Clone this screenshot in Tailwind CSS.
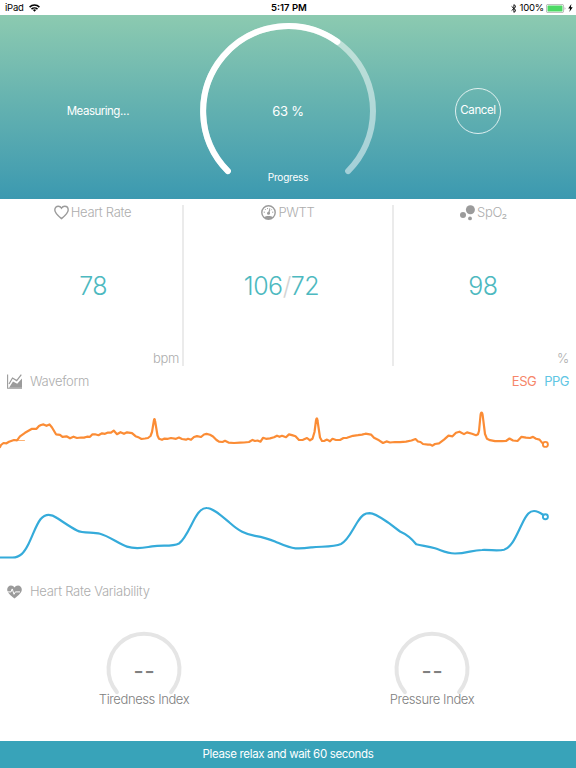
<!DOCTYPE html>
<html lang="en">
<head>
    <meta charset="UTF-8">
    <meta name="viewport" content="width=device-width, initial-scale=1.0">
    <title>Health Monitor</title>
    <script src="https://cdn.jsdelivr.net/npm/@tailwindcss/browser@4"></script>
</head>
<body class="bg-white">
    <div class="flex h-[768px] w-[576px] flex-col overflow-hidden bg-white font-['Inter',sans-serif]">
        <!-- Status bar -->
        <div class="grid h-[15px] shrink-0 grid-cols-3 items-center pt-px pr-[3px] pl-[5px] text-[9.5px] leading-none text-black">
            <div class="flex items-center gap-[5px]">
                <span class="tracking-[-0.2px]">iPad</span>
                <svg class="h-[8px] w-[11px]" viewBox="0 0 11 8" fill="none" stroke="#000" stroke-width="1.5">
                    <path d="M.6 3.1a7 7 0 0 1 9.8 0"/>
                    <path d="M2.5 5.1a4.3 4.3 0 0 1 6 0"/>
                    <path d="M5.5 7.8 3.9 6.1a2.3 2.3 0 0 1 3.2 0z" fill="#000" stroke="none"/>
                </svg>
            </div>
            <div class="text-center font-semibold">5:17 PM</div>
            <div class="flex items-center justify-end">
                <svg class="mr-[3px] h-[9px] w-[6px]" viewBox="0 0 6 9" fill="none" stroke="#000" stroke-width=".9">
                    <path d="M.6 2.4 5 6.5 2.9 8.4V.6L5 2.5.6 6.6"/>
                </svg>
                <span class="mr-[2px] tracking-[-0.2px]">100%</span>
                <svg class="h-[9px] w-[20px]" viewBox="0 0 20 9">
                    <rect x=".4" y=".4" width="17.2" height="8.2" rx="1.5" fill="#fff" stroke="#a8a8a8" stroke-width=".8"/>
                    <rect x="1.5" y="1.5" width="15" height="6" rx=".6" fill="#4cd964"/>
                    <path d="M18.6 3.2v2.6c1.2-.4 1.2-2.2 0-2.6z" fill="#a8a8a8"/>
                </svg>
                <svg class="ml-[2px] h-[8px] w-[5px]" viewBox="0 0 5 8"><path d="M3.4 0 .2 4.6h1.9L1.4 8l3.3-4.8H2.8z"/></svg>
            </div>
        </div>

        <!-- Progress header -->
        <div class="grid h-[184px] shrink-0 grid-cols-[196px_184px_196px] bg-linear-to-b from-[#8ccab0] via-[#63b1b0] to-[#3b99b0] text-white">
            <div class="flex items-center justify-center pt-[9px] text-[11.5px] tracking-[-0.5px]">
                <span>Measuring<span class="tracking-[-0.2px]">...</span></span>
            </div>
            <div class="relative flex items-center justify-center pt-[9px]">
                <svg class="absolute inset-0 h-[184px] w-[184px]" viewBox="0 0 184 184" fill="none" stroke-width="6" stroke-linecap="round">
                    <path d="M31.9 156.1A85 85 0 1 1 152.1 156.1" stroke="#fff" stroke-opacity=".5"/>
                    <path d="M31.9 156.1A85 85 0 0 1 141.3 26.8" stroke="#fff"/>
                </svg>
                <span class="text-[13px] tracking-[-0.3px]">63 %</span>
                <span class="absolute inset-x-0 top-[156px] text-center text-[10px] leading-[13px] tracking-[-0.2px]">Progress</span>
            </div>
            <div class="flex items-center justify-center pt-[7px]">
                <button class="h-[46px] w-[46px] rounded-full border border-white/80 text-[11.5px] tracking-[-0.4px]">Cancel</button>
            </div>
        </div>

        <!-- Metrics -->
        <div class="flex h-[167px] shrink-0 pt-[6px] text-[13px] font-light tracking-[-0.3px] text-[#adadad]">
            <div class="flex w-[184px] flex-col border-r-2 border-[#ebebeb]">
                <div class="flex h-[15px] items-center justify-center gap-[2px] pl-[3px]">
                    <svg class="h-[15px] w-[15px]" viewBox="0 0 15 15" fill="none" stroke="#9b9b9b" stroke-width="1.4"><path d="M7.5 13.6C3.2 10 .8 7.9.8 4.9.8 2.8 2.3 1.2 4.3 1.2c1.4 0 2.500.7 3.200 1.900.7-1.200 1.800-1.900 3.200-1.900 2 0 3.500 1.600 3.500 3.700 0 3-2.400 5.100-6.700 8.700z"/></svg>
                    <span>Heart Rate</span>
                </div>
                <div class="flex flex-1 items-center justify-center pt-[3px] pl-[4px] text-[25px] tracking-[-0.6px] text-[#4db9c0]">78</div>
                <div class="h-[16px] pr-[3px] text-right leading-[16px]">bpm</div>
            </div>
            <div class="flex w-[210px] flex-col border-r-2 border-[#ebebeb]">
                <div class="flex h-[15px] items-center justify-center gap-[2px]">
                    <svg class="h-[15px] w-[15px]" viewBox="0 0 15 15" fill="none">
                        <circle cx="7.5" cy="7.5" r="6.7" stroke="#9b9b9b" stroke-width="1.4"/>
                        <path d="M3 12.2c2-1.7 7-1.7 9 0l-2 1.8H5z" fill="#9b9b9b"/>
                        <path d="M6.9 8.5 8.6 3l.7.3-.9 5.6z" fill="#9b9b9b"/>
                        <circle cx="7.5" cy="8.3" r="1.5" fill="#9b9b9b"/>
                        <path d="M2.7 7.2h1.3M4 4.1l.9.9M6.5 3v1.1M10.700 4.400l-.7.9M11 7.200h1.300" stroke="#9b9b9b" stroke-width=".9"/>
                    </svg>
                    <span>PWTT</span>
                </div>
                <div class="flex flex-1 items-center justify-center pt-[3px] pr-[14px] pl-px text-[25px] tracking-[-0.5px] text-[#4db9c0]">106<span class="text-[#d4d4d4]">/</span>72</div>
                <div class="h-[16px]"></div>
            </div>
            <div class="flex w-[182px] flex-col">
                <div class="flex h-[15px] items-center justify-center gap-[2px] pr-[3px]">
                    <svg class="h-[16px] w-[15px]" viewBox="0 0 15 16" fill="#9b9b9b"><circle cx="10.4" cy="4.7" r="4.5"/><circle cx="3" cy="10" r="3"/><circle cx="10" cy="13.4" r="1.9"/></svg>
                    <span>SpO₂</span>
                </div>
                <div class="flex flex-1 items-center justify-center pt-[3px] pr-[4px] text-[25px] tracking-[-0.4px] text-[#4db9c0]">98</div>
                <div class="h-[16px] pr-[7px] text-right leading-[16px]">%</div>
            </div>
        </div>

        <!-- Waveform -->
        <div class="flex h-[30px] shrink-0 items-center gap-[8px] px-[7px] pt-px text-[13px] font-light tracking-[-0.3px] text-[#adadad]">
            <svg class="-mt-px h-[15px] w-[15px]" viewBox="0 0 15 15">
                <path d="M.6.5v13.8H15" fill="none" stroke="#9b9b9b" stroke-width="1.1"/>
                <path d="M2 10 5.5 4l4.2 2.6L14.3.7" fill="none" stroke="#9b9b9b" stroke-width="1.2"/>
                <path d="M2 13.8 6 7.4l4.2 2.4L15 4.5v9.3z" fill="#9b9b9b"/>
            </svg>
            <span>Waveform</span>
            <span class="ml-auto font-normal tracking-[-0.5px] text-[#f6866a]">ESG</span>
            <span class="font-normal tracking-[-0.5px] text-[#5fc6e4]">PPG</span>
        </div>
        <svg class="mt-[4px] h-[170px] w-[576px] shrink-0" viewBox="0 0 576 170" fill="none" stroke-linejoin="round" stroke-linecap="round">
            <!-- ESG -->
            <path d="M17 40.5H24.5" stroke="#fdb274" stroke-width="1"/>
            <path stroke="#fb8c35" stroke-width="2.200" d="M0 47 1 45 3.5 43 6.5 43.3 9 41.8 14 40 17 40.3 20 36.3 25 32.8 28.5 30.8 32 28.8 36.5 28.8 39 26 41 25 43.5 24.4 46.5 25.8 49.5 24.4 52 27.5 56 34.3 60 34.8 62.5 36.8 66.5 36.3 70 38.3 73.5 36.7 77 38 81 37.5 84 37.6 87 36.7 90 36.8 92.5 34.3 95 34.3 98.5 35.2 102 33.3 105 33.8 108 32.5 111 32.6 113.7 30.6 117 34.2 120.5 32.2 124 33.8 127 32.3 132 33.2 135.5 36.2 139 37.6 141.5 39 145 38.5 148 38 150.5 36 152 32 154 20 C154.3 18.5 154.8 18.8 155.1 21 L157.5 35.5 159 38.8 162 39.8 164.5 38.6 168 38.8 171 38 176 38.8 179 37.6 182 39 186 39.7 188 38.8 191 39.8 194 37 197 36.1 201 37 204 34.5 206.5 33.9 210 34.8 213 36.5 216.5 40 219 41.7 222.5 42 225 40.8 228.5 42.6 234 43 240 42.7 244 42.5 249 42 252.5 39.9 255 41 257.5 40.5 260.5 41.7 263 37.8 266 38.8 270 38.4 274 37.3 277 35.7 279.5 36.8 282 35.8 286 37.2 289 34.4 292 35.1 295.5 36.3 299 40 303 39.8 307 38 310 40.3 312.5 38.8 314.5 32 316 20.5 C316.4 17.5 317.2 17.5 317.5 20.5 L320 37.5 322 41 324.5 40.8 327 39.6 330 41.3 332.5 38.8 336 40 340 40 343.5 38 347 37.8 353 35.8 358 35.2 362 34.6 365.5 33.7 371 34.6 374 37.8 379 40.3 383 43 386.5 41.4 390 42.5 395 42 400 42.2 406 41.6 411.5 40.5 415.5 39 418 41.5 420.5 42 423 44 428 44.6 430 44.5 432.5 45.7 435 44 439 43.3 444 39.6 448.5 35.7 452.5 36.3 456 32.8 459.5 31.7 464 34.1 467 32.4 472 33.8 476 35.2 478 34.2 479 31 480.5 15.5 C480.8 11.7 482.3 11.7 482.7 15.5 L485 34 487 38.8 490 40.2 495 41.2 502 41.2 506 41 509.5 38.5 513 40.5 517.5 41 521.5 36.8 526 37.7 530 38 533 36.9 536 38.8 539.5 39.6 542 42.6 544 44"/>
            <circle cx="545.4" cy="44.4" r="2.5" fill="#fff" stroke="#fb8c35" stroke-width="1.9"/>
            <!-- PPG -->
            <path stroke="#35abda" stroke-width="2.200" d="M0 157.5H12.5C20 157.5 24 153 28.5 144 C33 135 36 125 40.5 119.3 C45 113.8 51 113.8 57 118 C64 122.5 71 127.5 77 130.5 C83 133.8 93 131.8 100 133.7 C109 136 119 144 127 146.6 C137 149.8 145 147.4 152 146.4 C163 144.8 172 147 179 143.5 C185 139.5 190 127 195 118 C199.500 110 203 107.700 207 108 C213 108 221.500 116 230 123 C239 131 245 134 255 135.8 C262 137 268 138.4 275 141.5 C282 144.5 288 147.8 295.5 148.3 C302 148.8 307 148 312 147.3 C322 146.3 334 147.2 341 144 C348 140.5 352 130.5 357.5 122 C362.500 114.5 365 113.1 369.5 113.1 C375.500 113.3 382 118.5 389 123.2 L400 131.500C407 134.5 411 137.7 416.2 144.3 C422 145.8 428 146.3 435 148.3 C442 150.5 446 153.5 455 153.5 C467 153.5 472 150 482 150 C491 149.7 498 151.2 504 149.7 C512 147.3 516 136 522 124 C527 113.5 530 111 534 111 C538 111 541 113.3 543.8 115.3"/>
            <circle cx="545.4" cy="116.8" r="2.5" fill="#fff" stroke="#35abda" stroke-width="1.9"/>
        </svg>

        <!-- Heart rate variability -->
        <div class="mt-[6px] flex h-[31px] shrink-0 items-center gap-[8px] px-[7px] text-[13px] font-light tracking-[-0.27px] text-[#adadad]">
            <svg class="h-[14px] w-[15px]" viewBox="0 0 15 14">
                <path d="M7.5 13.6C3 10 .2 7.6.2 4.5.2 2.1 1.900.4 4 .4c1.500 0 2.800.8 3.500 2C8.200 1.200 9.500.4 11 .4c2.100 0 3.800 1.700 3.800 4.100 0 3.100-2.800 5.500-7.300 9.100z" fill="#9b9b9b"/>
                <path d="M0 6.900h4l1.200-3L7 9.300l1.400-2.400H13" fill="none" stroke="#fff" stroke-width="1"/>
            </svg>
            <span>Heart Rate Variability</span>
        </div>
        <div class="grid flex-1 grid-cols-2 text-[#808080]">
            <div class="relative flex flex-col items-center pt-[24px]">
                <svg class="h-[60px] w-[76px] overflow-visible" viewBox="0 0 76 60" fill="none"><path d="M10.900 61.100A35.500 35.500 0 1 1 65.100 61.100" stroke="#e5e5e5" stroke-width="4" stroke-linecap="round"/></svg>
                <div class="absolute top-[53px] pl-px text-[22px] leading-[22px] font-medium tracking-[0.8px]">--</div>
                <div class="z-10 text-[13px] leading-[16px] font-light tracking-[-0.4px]">Tiredness Index</div>
            </div>
            <div class="relative flex flex-col items-center pt-[24px]">
                <svg class="h-[60px] w-[76px] overflow-visible" viewBox="0 0 76 60" fill="none"><path d="M10.900 61.100A35.500 35.500 0 1 1 65.100 61.100" stroke="#e5e5e5" stroke-width="4" stroke-linecap="round"/></svg>
                <div class="absolute top-[53px] pl-px text-[22px] leading-[22px] font-medium tracking-[0.8px]">--</div>
                <div class="z-10 text-[13px] leading-[16px] font-light tracking-[-0.4px]">Pressure Index</div>
            </div>
        </div>

        <!-- Footer -->
        <div class="flex h-[27px] shrink-0 items-center justify-center bg-[#38a3b9] text-[11.5px] tracking-[-0.35px] text-white">Please relax and wait 60 seconds</div>
    </div>
</body>
</html>
